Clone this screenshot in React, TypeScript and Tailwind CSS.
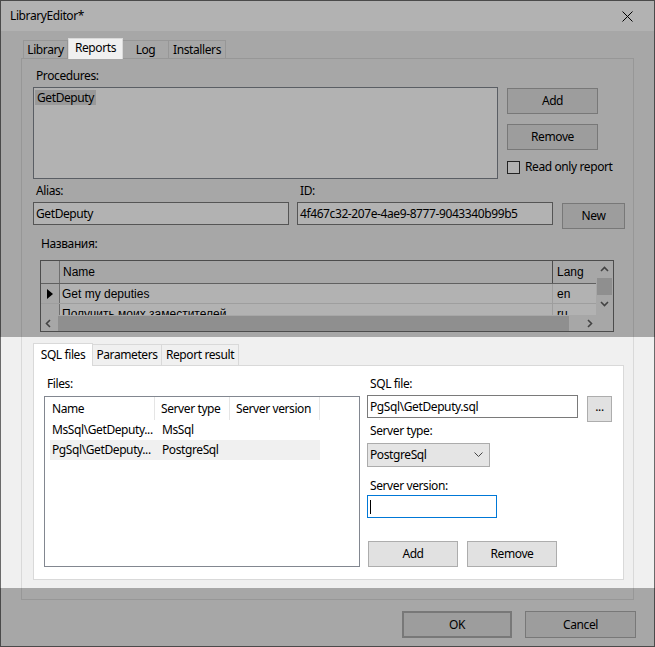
import type { ReactNode } from "react";

type BoxProps = { children?: ReactNode; className?: string };

function Button({ children, className = "" }: BoxProps) {
  return (
    <div
      className={`flex items-center justify-center border border-[#adadad] bg-[#e1e1e1] text-black ${className}`}
    >
      {children}
    </div>
  );
}

function Label({ children, className = "" }: BoxProps) {
  return <div className={`h-[17px] pl-[3px] leading-[17px] ${className}`}>{children}</div>;
}

function TextBox({ children, className = "" }: BoxProps) {
  return (
    <div
      className={`flex h-[23px] items-center border border-[#7a7a7a] bg-white pl-[2px] ${className}`}
    >
      {children}
    </div>
  );
}

function Chevron({ dir, className = "" }: { dir: "up" | "down" | "left" | "right"; className?: string }) {
  const d = {
    up: "M1 6 L4.5 2.5 L8 6",
    down: "M1 3 L4.5 6.5 L8 3",
    left: "M6 1 L2.5 4.5 L6 8",
    right: "M3 1 L6.5 4.5 L3 8",
  }[dir];
  return (
    <svg width="9" height="9" viewBox="0 0 9 9" className={className}>
      <path d={d} fill="none" stroke="#606060" strokeWidth="1.6" />
    </svg>
  );
}

// the Названия grid in the Reports tab
function NamesGrid() {
  return (
    <div className="ml-[7px] mt-[8px] flex h-[72px] w-[574px] border border-[#6e6e6e] bg-[#f0f0f0] font-['Liberation_Sans',sans-serif] text-[12px] tracking-normal">
      <div className="flex w-[555px] flex-col">
        <div className="h-[54px] overflow-hidden bg-white">
          <div className="flex h-[23px] border-b border-[#8a8a8a] bg-[#f0f0f0]">
            <div className="w-[19px] border-r border-[#a0a0a0]" />
            <div className="flex flex-1 items-center pl-[3px]">Name</div>
            <div className="flex w-[44px] items-center border-l border-[#6e6e6e] pl-[4px]">Lang</div>
          </div>
          <div className="flex h-[20px] border-b border-[#e3e3e3]">
            <div className="flex w-[19px] items-center justify-center border-r border-[#a0a0a0] bg-[#f0f0f0]">
              <svg width="6" height="10" viewBox="0 0 6 10">
                <path d="M0 0 L6 5 L0 10 Z" fill="#000" />
              </svg>
            </div>
            <div className="flex flex-1 items-center pl-[2px]">Get my deputies</div>
            <div className="flex w-[44px] items-center border-l border-[#e3e3e3] pl-[4px]">en</div>
          </div>
          <div className="flex h-[20px]">
            <div className="w-[19px] border-r border-[#a0a0a0] bg-[#f0f0f0]" />
            <div className="flex flex-1 items-center pl-[2px]">Получить моих заместителей</div>
            <div className="flex w-[44px] items-center border-l border-[#e3e3e3] pl-[4px]">ru</div>
          </div>
        </div>
        <div className="flex h-[16px] items-center bg-[#f0f0f0]">
          <Chevron dir="left" className="ml-[3px]" />
          <div className="ml-[5px] h-[15px] w-[511px] bg-[#cdcdcd]" />
          <Chevron dir="right" className="ml-[16px]" />
        </div>
      </div>
      <div className="flex w-[17px] flex-col">
        <div className="flex h-[54px] flex-col items-center bg-[#f0f0f0]">
          <Chevron dir="up" className="mt-[4px]" />
          <div className="mt-[4px] h-[17px] w-[15px] bg-[#cdcdcd]" />
          <Chevron dir="down" className="mt-[4px]" />
        </div>
        <div className="h-[16px] bg-[#f0f0f0]" />
      </div>
    </div>
  );
}

function FilesList() {
  return (
    <div className="mt-[4px] h-[171px] w-[316px] border border-[#828790] bg-white">
      <div className="flex h-[23px]">
        <div className="flex w-[110px] items-center border-r border-[#e5e5e5] pl-[7px]">Name</div>
        <div className="flex w-[75px] items-center border-r border-[#e5e5e5] pl-[6px]">Server type</div>
        <div className="flex w-[90px] items-center border-r border-[#e5e5e5] pl-[6px]">Server version</div>
      </div>
      <div className="ml-[5px] flex h-[20px] w-[270px] items-center">
        <div className="w-[105px] pl-[2px]">MsSql\GetDeputy...</div>
        <div className="pl-[7px]">MsSql</div>
      </div>
      <div className="ml-[5px] flex h-[20px] w-[270px] items-center bg-[#f0f0f0]">
        <div className="w-[105px] pl-[2px]">PgSql\GetDeputy...</div>
        <div className="pl-[7px]">PostgreSql</div>
      </div>
    </div>
  );
}

function SqlFilesTabs() {
  return (
    <div className="mt-[11px]">
      <div className="flex h-[22px] items-end">
        <div className="relative z-10 -mb-px flex h-[23px] w-[60px] items-center justify-center border border-b-0 border-[#d9d9d9] bg-white">
          SQL files
        </div>
        <div className="flex h-[21px] w-[69px] items-center justify-center border border-b-0 border-l-0 border-[#d9d9d9] bg-[#f0f0f0]">
          Parameters
        </div>
        <div className="flex h-[21px] w-[77px] items-center justify-center border border-b-0 border-l-0 border-[#d9d9d9] bg-[#f0f0f0]">
          Report result
        </div>
      </div>
      <div className="flex h-[215px] w-[591px] border border-[#d9d9d9] bg-white pt-[9px]">
        <div className="ml-[10px] flex flex-col">
          <Label>Files:</Label>
          <FilesList />
        </div>
        <div className="ml-[7px] flex flex-col">
          <Label>SQL file:</Label>
          <div className="mt-[3px] flex h-[27px] items-start">
            <TextBox className="w-[211px]">PgSql\GetDeputy.sql</TextBox>
            <Button className="ml-[9px] mt-px h-[26px] w-[25px] pb-[4px]">...</Button>
          </div>
          <Label>Server type:</Label>
          <div className="mt-[4px] flex h-[24px] w-[123px] items-center justify-between border border-[#acacac] bg-[#e5e5e5] pl-[2px] pr-[6px]">
            <span>PostgreSql</span>
            <svg width="9" height="6" viewBox="0 0 9 6">
              <path d="M0.5 0.5 L4.5 4.5 L8.5 0.5" fill="none" stroke="#444" strokeWidth="1" />
            </svg>
          </div>
          <Label className="mt-[10px]">Server version:</Label>
          <div className="mt-px flex h-[23px] w-[130px] items-center border border-[#0078d7] bg-white pl-[2px]">
            <div className="h-[14px] w-px bg-black" />
          </div>
          <div className="mt-[23px] flex">
            <Button className="ml-px h-[26px] w-[90px]">Add</Button>
            <Button className="ml-[9px] h-[26px] w-[90px]">Remove</Button>
          </div>
        </div>
      </div>
    </div>
  );
}

function ReportsPage() {
  return (
    <div className="h-[542px] w-[613px] border border-[#d9d9d9] bg-[#f0f0f0] pl-[11px] pt-[8px]">
      <div className="flex">
        <div className="w-[465px]">
          <Label>Procedures:</Label>
          <div className="mt-[3px] h-[92px] border border-[#828790] bg-white pl-px pt-px">
            <span className="inline-block bg-[#dcdcdc] px-[2px] leading-[15px]">GetDeputy</span>
          </div>
        </div>
        <div className="ml-[9px] flex flex-col">
          <Button className="mt-[21px] h-[26px] w-[91px]">Add</Button>
          <Button className="mt-[10px] h-[26px] w-[91px]">Remove</Button>
          <div className="mt-[10px] flex h-[14px] items-center gap-[5px]">
            <div className="h-[13px] w-[13px] border border-[#333] bg-white" />
            <span>Read only report</span>
          </div>
        </div>
      </div>

      <div className="mt-[3px] flex">
        <div className="w-[256px]">
          <Label>Alias:</Label>
          <TextBox className="mt-[3px]">GetDeputy</TextBox>
        </div>
        <div className="ml-[8px] w-[256px]">
          <Label>ID:</Label>
          <TextBox className="mt-[3px]">4f467c32-207e-4ae9-8777-9043340b99b5</TextBox>
        </div>
        <Button className="ml-[9px] mt-[21px] h-[26px] w-[63px]">New</Button>
      </div>

      <Label className="ml-[5px] mt-[6px]">Названия:</Label>
      <NamesGrid />

      <SqlFilesTabs />
    </div>
  );
}

export default function App() {
  return (
    <div className="relative h-[647px] w-[655px] overflow-hidden font-['Noto_Sans','Liberation_Sans',sans-serif] text-[12px] tracking-[-0.4px] text-black">
      <div className="flex h-full w-full flex-col border border-[#6a6a6a] bg-[#f0f0f0]">
        <div className="flex h-[30px] items-center justify-between bg-white pl-[9px] pr-[21px]">
          <span>LibraryEditor*</span>
          <svg width="11" height="11" viewBox="0 0 11 11">
            <path d="M0.5 0.5 L10.5 10.5 M10.5 0.5 L0.5 10.5" stroke="#000" strokeWidth="1" />
          </svg>
        </div>

        <div className="pl-[20px] pt-[7px]">
          <div className="flex h-[20px] items-end pl-[2px]">
            <div className="flex h-[18px] w-[45px] items-center justify-center border border-b-0 border-[#d9d9d9] bg-[#f0f0f0]">
              Library
            </div>
            <div className="relative z-10 -mb-px flex h-[21px] w-[55px] items-center justify-center border border-b-0 border-[#d9d9d9] bg-[#f0f0f0] pb-[2px]">
              Reports
            </div>
            <div className="flex h-[18px] w-[46px] items-center justify-center border border-b-0 border-l-0 border-[#d9d9d9] bg-[#f0f0f0]">
              Log
            </div>
            <div className="flex h-[18px] w-[57px] items-center justify-center border border-b-0 border-l-0 border-[#d9d9d9] bg-[#f0f0f0]">
              Installers
            </div>
          </div>
          <ReportsPage />
        </div>

        <div className="mt-[11px] flex justify-end gap-[13px] pr-[18px]">
          <Button className="h-[27px] w-[110px] border-2 border-[#555]">OK</Button>
          <Button className="h-[27px] w-[111px]">Cancel</Button>
        </div>
      </div>

      <div className="pointer-events-none absolute left-0 top-0 h-[337px] w-full bg-black/30" />
      <div className="pointer-events-none absolute bottom-0 left-0 top-[588px] w-full bg-black/30" />
    </div>
  );
}
